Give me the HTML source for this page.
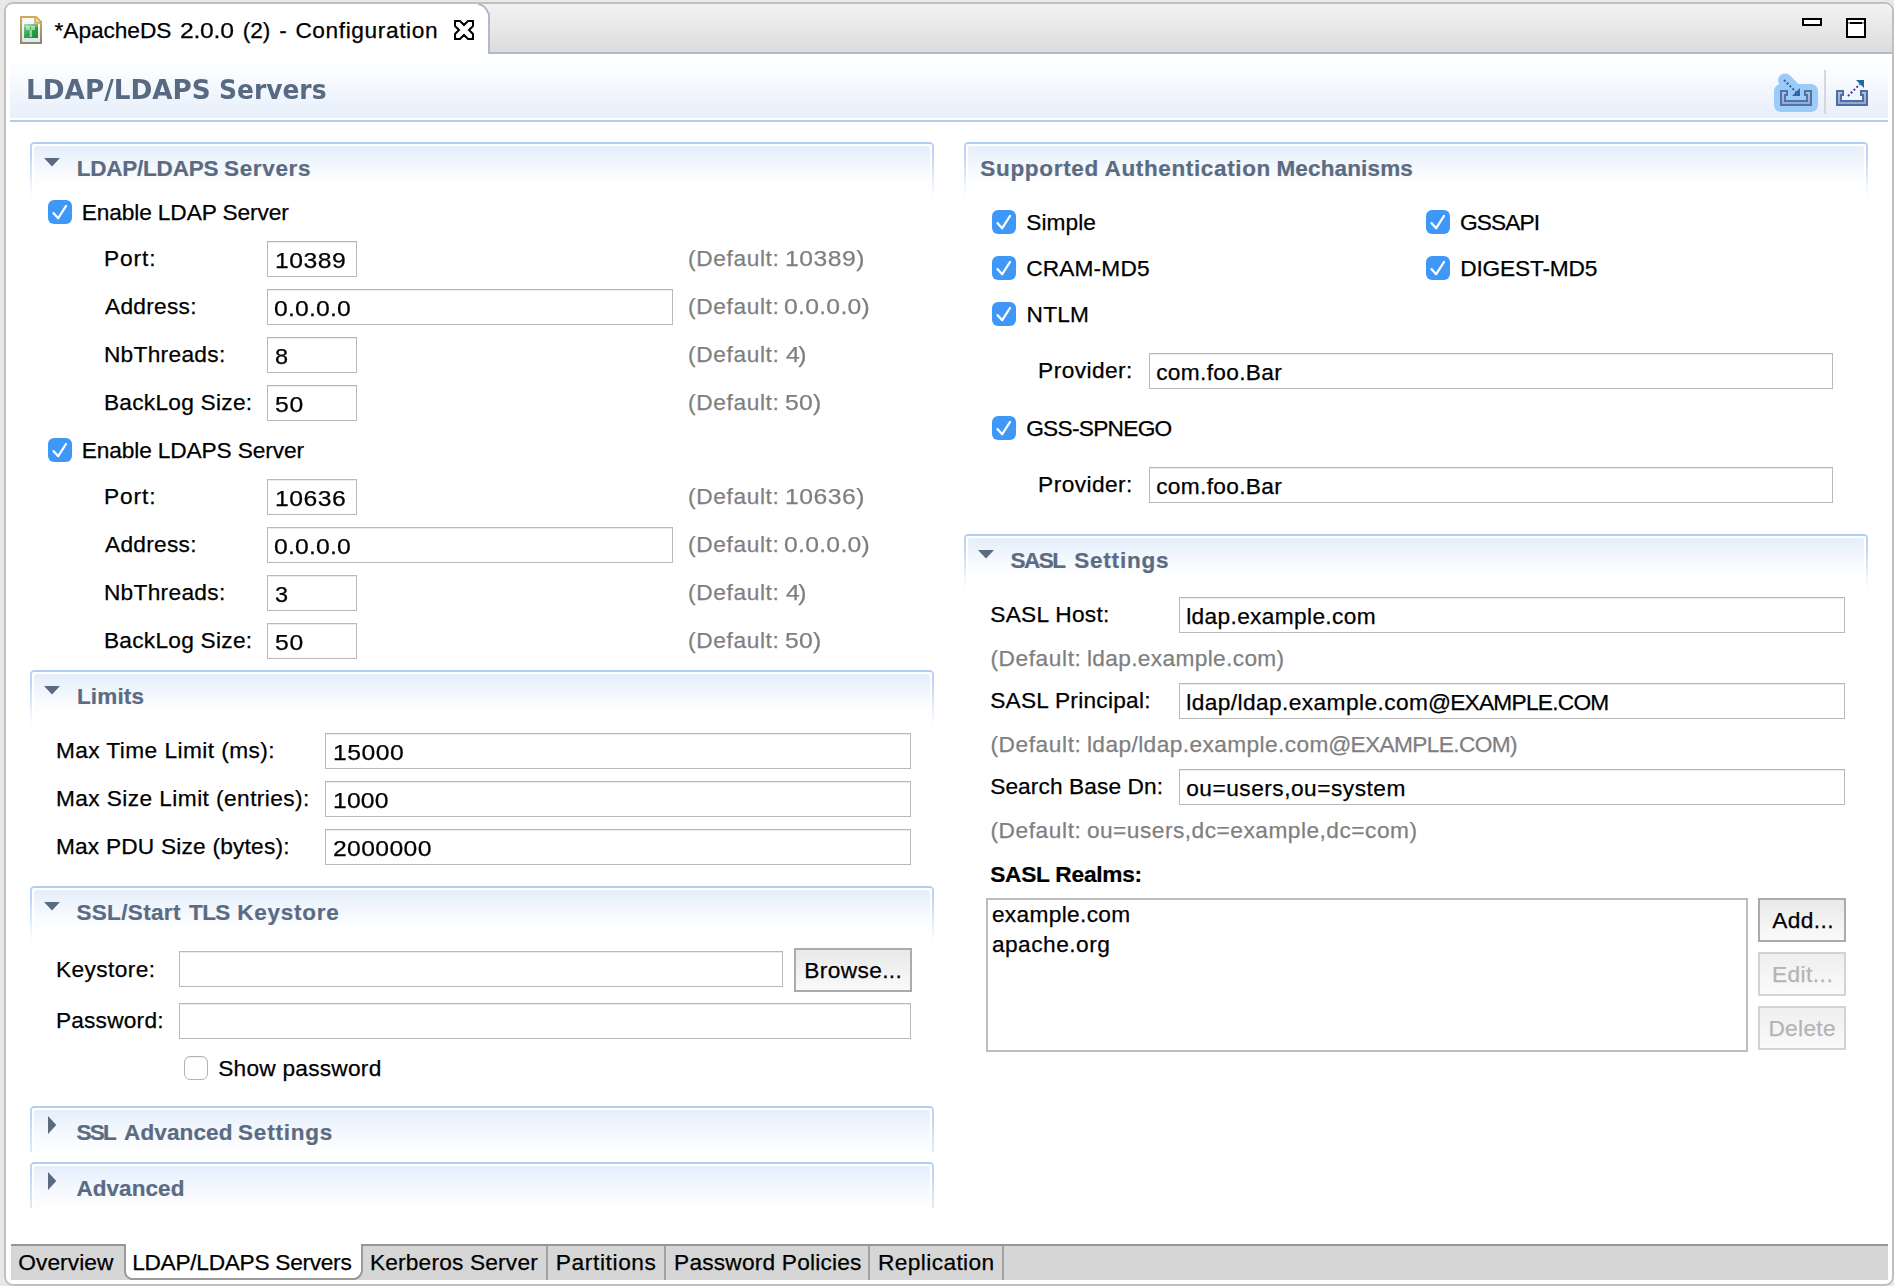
<!DOCTYPE html>
<html><head><meta charset="utf-8"><title>ApacheDS Configuration</title>
<style>
html,body{margin:0;padding:0}
body{width:1894px;height:1286px;position:relative;overflow:hidden;background:#e8e8e8;font-family:"Liberation Sans",sans-serif;font-size:22px;color:#000}
div,span,svg{position:absolute;box-sizing:border-box}
.t{white-space:pre;line-height:28.7px;font-size:22.7px;-webkit-text-stroke:0.25px currentColor;margin-left:0.4px}
.b{font-weight:700}
#win{left:4px;top:2px;width:1890px;height:1284px;border:2px solid #c1c1b9;border-radius:9px;background:#fff}
#tabbar{left:6px;top:4px;width:1886px;height:48px;background:linear-gradient(#f2f2f2,#e9e9e9 45%,#dbdbdb);border-radius:9px 9px 0 0}
#tabline{left:488px;top:52px;width:1404px;height:2px;background:#b1b8cf}
.in{border:1px solid #b9b9b9;background:#fff;height:36px;box-shadow:inset 0 1px 0 #9f9f9f33}
.cb{width:24px;height:24px;border-radius:6px;background:#3f98f7}
.cbu{width:24px;height:24px;border-radius:6px;background:#fff;border:1px solid #b4b4b4;box-shadow:inset 0 1px 1px #0001}
.sec{border:2px solid #b1cef1;border-left-color:#bad4f3;border-right-color:#bad4f3;border-bottom:0;border-radius:4px 4px 0 0;height:56px;-webkit-mask-image:linear-gradient(#000 0,#000 20%,transparent 100%);mask-image:linear-gradient(#000 0,#000 20%,transparent 100%)}
.secg{left:2px;top:2px;right:2px;bottom:0;background:linear-gradient(#e5effb,#f2f7fd 55%,#fff 92%);border-radius:2px 2px 0 0}
.secc{-webkit-mask-image:linear-gradient(#000 0,#000 20%,rgba(0,0,0,.45) 100%);mask-image:linear-gradient(#000 0,#000 20%,rgba(0,0,0,.45) 100%)}
.secc .secg{background:linear-gradient(#e5effb,#f1f6fd 55%,#fbfdff 100%)}
.btn{border:2px solid #ababab;background:linear-gradient(#e9e9e9,#fafafa);}
.btnd{border:2px solid #d3d3d3;background:linear-gradient(#efefef,#fafafa);}
.tri{width:0;height:0}
</style></head>
<body>
<div id="win"></div><div id="tabbar"></div><div id="tabline"></div>
<svg style="left:6px;top:4px" width="490" height="52" viewBox="0 0 490 52"><path d="M0 50V8Q0 0 8 0H472Q479 1 481 6Q482 9 483 10V49H490" fill="#fff"/><path d="M472 0Q478 1 480.5 5.500Q482 9 483 10V49H490" fill="none" stroke="#b1b8cf" stroke-width="2"/></svg>
<svg style="left:20px;top:16px" width="22" height="28" viewBox="0 0 22 28"><defs><linearGradient id="g1" x1="0" y1="0" x2="0" y2="1"><stop offset="0" stop-color="#d2a955"/><stop offset="1" stop-color="#8f8864"/></linearGradient><linearGradient id="g2" x1="0" y1="0" x2="0" y2="1"><stop offset="0" stop-color="#fbfcfe"/><stop offset="1" stop-color="#dbe4f6"/></linearGradient><linearGradient id="g3" x1="0" y1="0" x2="1" y2="1"><stop offset="0" stop-color="#7fd58f"/><stop offset="0.5" stop-color="#2fa548"/><stop offset="1" stop-color="#168a32"/></linearGradient></defs><path d="M1 1H16L21 6V27H1Z" fill="url(#g2)" stroke="url(#g1)" stroke-width="2"/><path d="M15 1V7H21" fill="#ecd3a0" stroke="#cfa85a" stroke-width="1.5"/><rect x="4" y="8" width="14" height="14" fill="url(#g3)"/><path d="M4 8h14v3h-14z" fill="#fff" opacity=".25"/><path d="M6 10h4v4h-4zM11 10h4v4h-4zM9.500 14h2.500v7h-2.500z" fill="#fff" opacity=".5"/></svg>
<svg style="left:453px;top:19px" width="22" height="22" viewBox="0 0 22 22"><path d="M2 2H7L11 6L15 2H20V7L16 11L20 15V20H15L11 16L7 20H2V15L6 11L2 7Z" fill="#fff" stroke="#000" stroke-width="2" stroke-linejoin="miter"/></svg>
<div style="left:1802px;top:18px;width:20px;height:8px;border:2px solid #000;background:#fff"></div>
<div style="left:1846px;top:18px;width:20px;height:20px;border:2px solid #000;background:#fff"><div style="left:0;top:2px;width:16px;height:2px;background:#999"></div><div style="left:2px;top:2px;width:12px;height:2px;background:#000"></div></div>
<div style="left:10px;top:54px;width:1878px;height:64px;background:linear-gradient(#fff 0,#fafcfe 30%,#f0f5fd 65%,#e6effb 100%)"></div>
<div style="left:10px;top:120px;width:1878px;height:2px;background:#aecbf0"></div>
<svg style="left:1768px;top:66px" width="110" height="52" viewBox="1768 66 110 52">
<defs><linearGradient id="tr" x1="0" y1="0" x2="0" y2="1"><stop offset="0" stop-color="#b4c3df"/><stop offset="1" stop-color="#8fa6cf"/></linearGradient></defs>
<rect x="1774" y="84" width="44" height="28" rx="7" fill="#9dcbf8"/>
<path d="M1785 80.500L1797 92.500" stroke="#9dcbf8" stroke-width="14" stroke-linecap="round"/>
<path d="M1781 91H1787V95H1785V101H1807V95H1805V91H1811V105H1781Z" fill="url(#tr)" stroke="#4f73aa" stroke-width="2"/>
<path d="M1784 80L1796 92" stroke="#3d55a8" stroke-width="2" stroke-dasharray="2 2"/>
<path d="M1800 88V96H1792Z" fill="#2c6ba3"/>
<rect x="1824" y="70" width="2" height="44" fill="#d5d7dc"/>
<path d="M1837 91H1843V95H1841V101H1863V95H1861V91H1867V105H1837Z" fill="url(#tr)" stroke="#4f6fa3" stroke-width="2"/>
<path d="M1848 96L1860 84" stroke="#4a35a8" stroke-width="2" stroke-dasharray="2 2"/>
<path d="M1856 80H1864V88Z" fill="#1f69a4"/>
</svg>
<div class="sec" style="left:30px;top:142px;width:904px;height:56px"><div class="secg"></div></div>
<svg style="left:44px;top:158px" width="16" height="9" viewBox="0 0 16 9"><path d="M0 0H16L8 8.4Z" fill="#5a6b80"/></svg>
<div class="sec" style="left:30px;top:670px;width:904px;height:56px"><div class="secg"></div></div>
<svg style="left:44px;top:686px" width="16" height="9" viewBox="0 0 16 9"><path d="M0 0H16L8 8.4Z" fill="#5a6b80"/></svg>
<div class="sec" style="left:30px;top:886px;width:904px;height:56px"><div class="secg"></div></div>
<svg style="left:44px;top:902px" width="16" height="9" viewBox="0 0 16 9"><path d="M0 0H16L8 8.4Z" fill="#5a6b80"/></svg>
<div class="sec secc" style="left:30px;top:1106px;width:904px;height:46px"><div class="secg"></div></div>
<svg style="left:48px;top:1116px" width="9" height="18" viewBox="0 0 9 18"><path d="M0 0V18L8.300 9Z" fill="#5a6b80"/></svg>
<div class="sec secc" style="left:30px;top:1162px;width:904px;height:46px"><div class="secg"></div></div>
<svg style="left:48px;top:1172px" width="9" height="18" viewBox="0 0 9 18"><path d="M0 0V18L8.300 9Z" fill="#5a6b80"/></svg>
<div class="sec" style="left:964px;top:142px;width:904px;height:56px"><div class="secg"></div></div>
<div class="sec" style="left:964px;top:534px;width:904px;height:56px"><div class="secg"></div></div>
<svg style="left:978px;top:550px" width="16" height="9" viewBox="0 0 16 9"><path d="M0 0H16L8 8.4Z" fill="#5a6b80"/></svg>
<div class="cb" style="left:48px;top:200px"><svg style="left:0;top:0" width="24" height="24" viewBox="0 0 24 24"><path d="M5.6 13.2L10.2 18.2L18 6" fill="none" stroke="#fff" stroke-width="2.3" stroke-linecap="round" stroke-linejoin="round"/></svg></div>
<div class="cb" style="left:48px;top:438px"><svg style="left:0;top:0" width="24" height="24" viewBox="0 0 24 24"><path d="M5.6 13.2L10.2 18.2L18 6" fill="none" stroke="#fff" stroke-width="2.3" stroke-linecap="round" stroke-linejoin="round"/></svg></div>
<div class="in" style="left:267px;top:241px;width:90px;height:36px"></div>
<div class="in" style="left:267px;top:289px;width:406px;height:36px"></div>
<div class="in" style="left:267px;top:337px;width:90px;height:36px"></div>
<div class="in" style="left:267px;top:385px;width:90px;height:36px"></div>
<div class="in" style="left:267px;top:479px;width:90px;height:36px"></div>
<div class="in" style="left:267px;top:527px;width:406px;height:36px"></div>
<div class="in" style="left:267px;top:575px;width:90px;height:36px"></div>
<div class="in" style="left:267px;top:623px;width:90px;height:36px"></div>
<div class="in" style="left:325px;top:733px;width:586px;height:36px"></div>
<div class="in" style="left:325px;top:781px;width:586px;height:36px"></div>
<div class="in" style="left:325px;top:829px;width:586px;height:36px"></div>
<div class="in" style="left:179px;top:951px;width:604px;height:36px"></div>
<div class="in" style="left:179px;top:1003px;width:732px;height:36px"></div>
<div class="btn" style="left:794px;top:948px;width:118px;height:44px"></div>
<div class="cbu" style="left:184px;top:1056px"></div>
<div class="cb" style="left:992px;top:210px"><svg style="left:0;top:0" width="24" height="24" viewBox="0 0 24 24"><path d="M5.6 13.2L10.2 18.2L18 6" fill="none" stroke="#fff" stroke-width="2.3" stroke-linecap="round" stroke-linejoin="round"/></svg></div>
<div class="cb" style="left:992px;top:256px"><svg style="left:0;top:0" width="24" height="24" viewBox="0 0 24 24"><path d="M5.6 13.2L10.2 18.2L18 6" fill="none" stroke="#fff" stroke-width="2.3" stroke-linecap="round" stroke-linejoin="round"/></svg></div>
<div class="cb" style="left:992px;top:302px"><svg style="left:0;top:0" width="24" height="24" viewBox="0 0 24 24"><path d="M5.6 13.2L10.2 18.2L18 6" fill="none" stroke="#fff" stroke-width="2.3" stroke-linecap="round" stroke-linejoin="round"/></svg></div>
<div class="cb" style="left:992px;top:416px"><svg style="left:0;top:0" width="24" height="24" viewBox="0 0 24 24"><path d="M5.6 13.2L10.2 18.2L18 6" fill="none" stroke="#fff" stroke-width="2.3" stroke-linecap="round" stroke-linejoin="round"/></svg></div>
<div class="cb" style="left:1426px;top:210px"><svg style="left:0;top:0" width="24" height="24" viewBox="0 0 24 24"><path d="M5.6 13.2L10.2 18.2L18 6" fill="none" stroke="#fff" stroke-width="2.3" stroke-linecap="round" stroke-linejoin="round"/></svg></div>
<div class="cb" style="left:1426px;top:256px"><svg style="left:0;top:0" width="24" height="24" viewBox="0 0 24 24"><path d="M5.6 13.2L10.2 18.2L18 6" fill="none" stroke="#fff" stroke-width="2.3" stroke-linecap="round" stroke-linejoin="round"/></svg></div>
<div class="in" style="left:1149px;top:353px;width:684px;height:36px"></div>
<div class="in" style="left:1149px;top:467px;width:684px;height:36px"></div>
<div class="in" style="left:1179px;top:597px;width:666px;height:36px"></div>
<div class="in" style="left:1179px;top:683px;width:666px;height:36px"></div>
<div class="in" style="left:1179px;top:769px;width:666px;height:36px"></div>
<div style="left:986px;top:898px;width:762px;height:154px;border:2px solid #bdbdbd;background:#fff"></div>
<div class="btn" style="left:1758px;top:898px;width:88px;height:44px"></div>
<div class="btnd" style="left:1758px;top:952px;width:88px;height:44px"></div>
<div class="btnd" style="left:1758px;top:1006px;width:88px;height:44px"></div>
<div style="left:11px;top:1244px;width:1877px;height:36px;background:#d6d6d6;border-top:2px solid #969696"></div>
<svg style="left:120px;top:1240px" width="250" height="44" viewBox="120 1240 250 44"><path d="M126 1240V1272Q126 1277 131 1278H354Q360 1277 361 1272V1240Z" fill="#fff"/><path d="M125 1244V1272Q125.500 1277 131 1279H355Q361 1277 362 1271V1246" fill="none" stroke="#9a9a9a" stroke-width="2"/></svg>
<div style="left:546px;top:1246px;width:2px;height:34px;background:#a3a3a3"></div>
<div style="left:664px;top:1246px;width:2px;height:34px;background:#a3a3a3"></div>
<div style="left:868px;top:1246px;width:2px;height:34px;background:#a3a3a3"></div>
<div style="left:1002px;top:1246px;width:2px;height:34px;background:#a3a3a3"></div>
<span class="t" style="left:54.20px;top:15.70px;letter-spacing:-0.062px;">*ApacheDS </span>
<span class="t" style="left:180.01px;top:15.70px;letter-spacing:-0.255px;transform:scaleX(1.090);transform-origin:0 0;">2.0.0 </span>
<span class="t" style="left:242.30px;top:15.70px;letter-spacing:-0.050px;">(2) </span>
<span class="t" style="left:278.80px;top:15.70px;letter-spacing:0.000px;">- </span>
<span class="t" style="left:295.00px;top:15.70px;letter-spacing:0.600px;">Configuration</span>
<span class="t b" style="left:25.85px;top:73.30px;letter-spacing:0.000px;font-size:27px;line-height:33px;-webkit-text-stroke-width:0.22px;color:#586a82;font-family:'DejaVu Sans', 'Liberation Sans', sans-serif;-webkit-text-stroke:0;transform:scaleX(0.973);transform-origin:0 0;">LDAP/LDAPS </span>
<span class="t b" style="left:218.15px;top:73.30px;letter-spacing:0.000px;font-size:27px;line-height:33px;-webkit-text-stroke-width:0.22px;color:#586a82;font-family:'DejaVu Sans', 'Liberation Sans', sans-serif;-webkit-text-stroke:0;transform:scaleX(0.924);transform-origin:0 0;">Servers</span>
<span class="t b" style="left:76.30px;top:155.00px;letter-spacing:-0.222px;font-size:22.5px;line-height:28.5px;-webkit-text-stroke-width:0.22px;color:#5a6b82;">LDAP/LDAPS </span>
<span class="t b" style="left:223.60px;top:155.00px;letter-spacing:0.667px;font-size:22.5px;line-height:28.5px;-webkit-text-stroke-width:0.22px;color:#5a6b82;">Servers</span>
<span class="t b" style="left:76.50px;top:683.00px;letter-spacing:0.180px;font-size:22.5px;line-height:28.5px;-webkit-text-stroke-width:0.22px;color:#5a6b82;">Limits</span>
<span class="t b" style="left:76.00px;top:899.00px;letter-spacing:0.350px;font-size:22.5px;line-height:28.5px;-webkit-text-stroke-width:0.22px;color:#5a6b82;">SSL/Start </span>
<span class="t b" style="left:188.70px;top:899.00px;letter-spacing:-0.650px;font-size:22.5px;line-height:28.5px;-webkit-text-stroke-width:0.22px;color:#5a6b82;">TLS </span>
<span class="t b" style="left:236.90px;top:899.00px;letter-spacing:0.757px;font-size:22.5px;line-height:28.5px;-webkit-text-stroke-width:0.22px;color:#5a6b82;">Keystore</span>
<span class="t b" style="left:76.00px;top:1119.00px;letter-spacing:-1.650px;font-size:22.5px;line-height:28.5px;-webkit-text-stroke-width:0.22px;color:#5a6b82;">SSL </span>
<span class="t b" style="left:123.70px;top:1119.00px;letter-spacing:0.114px;font-size:22.5px;line-height:28.5px;-webkit-text-stroke-width:0.22px;color:#5a6b82;">Advanced </span>
<span class="t b" style="left:237.70px;top:1119.00px;letter-spacing:0.771px;font-size:22.5px;line-height:28.5px;-webkit-text-stroke-width:0.22px;color:#5a6b82;">Settings</span>
<span class="t b" style="left:76.00px;top:1175.00px;letter-spacing:0.071px;font-size:22.5px;line-height:28.5px;-webkit-text-stroke-width:0.22px;color:#5a6b82;">Advanced</span>
<span class="t b" style="left:979.90px;top:155.00px;letter-spacing:0.688px;font-size:22.5px;line-height:28.5px;-webkit-text-stroke-width:0.22px;color:#5a6b82;">Supported </span>
<span class="t b" style="left:1104.20px;top:155.00px;letter-spacing:0.631px;font-size:22.5px;line-height:28.5px;-webkit-text-stroke-width:0.22px;color:#5a6b82;">Authentication </span>
<span class="t b" style="left:1276.00px;top:155.00px;letter-spacing:0.156px;font-size:22.5px;line-height:28.5px;-webkit-text-stroke-width:0.22px;color:#5a6b82;">Mechanisms</span>
<span class="t b" style="left:1010.00px;top:547.00px;letter-spacing:-1.500px;font-size:22.5px;line-height:28.5px;-webkit-text-stroke-width:0.22px;color:#5a6b82;">SASL </span>
<span class="t b" style="left:1073.80px;top:547.00px;letter-spacing:0.800px;font-size:22.5px;line-height:28.5px;-webkit-text-stroke-width:0.22px;color:#5a6b82;">Settings</span>
<span class="t" style="left:81.30px;top:197.70px;letter-spacing:-0.112px;">Enable LDAP Server</span>
<span class="t" style="left:81.30px;top:435.70px;letter-spacing:-0.117px;">Enable LDAPS Server</span>
<span class="t" style="left:103.50px;top:244.00px;letter-spacing:0.950px;">Port:</span>
<span class="t" style="left:274.62px;top:245.70px;letter-spacing:0.459px;transform:scaleX(1.090);transform-origin:0 0;">10389</span>
<span class="t" style="left:687.70px;top:244.00px;letter-spacing:0.625px;color:#7f7f7f;">(Default: </span>
<span class="t" style="left:784.82px;top:244.00px;letter-spacing:0.472px;color:#7f7f7f;transform:scaleX(1.090);transform-origin:0 0;">10389)</span>
<span class="t" style="left:104.70px;top:292.00px;letter-spacing:0.271px;">Address:</span>
<span class="t" style="left:273.71px;top:293.70px;letter-spacing:0.180px;transform:scaleX(1.090);transform-origin:0 0;">0.0.0.0</span>
<span class="t" style="left:687.70px;top:292.00px;letter-spacing:0.625px;color:#7f7f7f;">(Default: </span>
<span class="t" style="left:783.61px;top:292.00px;letter-spacing:0.256px;color:#7f7f7f;transform:scaleX(1.090);transform-origin:0 0;">0.0.0.0)</span>
<span class="t" style="left:103.50px;top:340.00px;letter-spacing:0.311px;">NbThreads:</span>
<span class="t" style="left:274.26px;top:341.70px;letter-spacing:0.000px;transform:scaleX(1.036);transform-origin:0 0;">8</span>
<span class="t" style="left:687.70px;top:340.00px;letter-spacing:0.625px;color:#7f7f7f;">(Default: </span>
<span class="t" style="left:785.70px;top:340.00px;letter-spacing:-1.294px;color:#7f7f7f;transform:scaleX(1.090);transform-origin:0 0;">4)</span>
<span class="t" style="left:103.50px;top:388.00px;letter-spacing:0.267px;">BackLog Size:</span>
<span class="t" style="left:274.21px;top:389.70px;letter-spacing:0.670px;transform:scaleX(1.090);transform-origin:0 0;">50</span>
<span class="t" style="left:687.70px;top:388.00px;letter-spacing:0.625px;color:#7f7f7f;">(Default: </span>
<span class="t" style="left:784.11px;top:388.00px;letter-spacing:0.234px;color:#7f7f7f;transform:scaleX(1.090);transform-origin:0 0;">50)</span>
<span class="t" style="left:103.50px;top:482.00px;letter-spacing:0.950px;">Port:</span>
<span class="t" style="left:274.62px;top:483.70px;letter-spacing:0.459px;transform:scaleX(1.090);transform-origin:0 0;">10636</span>
<span class="t" style="left:687.70px;top:482.00px;letter-spacing:0.625px;color:#7f7f7f;">(Default: </span>
<span class="t" style="left:784.82px;top:482.00px;letter-spacing:0.472px;color:#7f7f7f;transform:scaleX(1.090);transform-origin:0 0;">10636)</span>
<span class="t" style="left:104.70px;top:530.00px;letter-spacing:0.271px;">Address:</span>
<span class="t" style="left:273.71px;top:531.70px;letter-spacing:0.180px;transform:scaleX(1.090);transform-origin:0 0;">0.0.0.0</span>
<span class="t" style="left:687.70px;top:530.00px;letter-spacing:0.625px;color:#7f7f7f;">(Default: </span>
<span class="t" style="left:783.61px;top:530.00px;letter-spacing:0.256px;color:#7f7f7f;transform:scaleX(1.090);transform-origin:0 0;">0.0.0.0)</span>
<span class="t" style="left:103.50px;top:578.00px;letter-spacing:0.311px;">NbThreads:</span>
<span class="t" style="left:274.26px;top:579.70px;letter-spacing:0.000px;transform:scaleX(1.036);transform-origin:0 0;">3</span>
<span class="t" style="left:687.70px;top:578.00px;letter-spacing:0.625px;color:#7f7f7f;">(Default: </span>
<span class="t" style="left:785.70px;top:578.00px;letter-spacing:-1.294px;color:#7f7f7f;transform:scaleX(1.090);transform-origin:0 0;">4)</span>
<span class="t" style="left:103.50px;top:626.00px;letter-spacing:0.267px;">BackLog Size:</span>
<span class="t" style="left:274.21px;top:627.70px;letter-spacing:0.670px;transform:scaleX(1.090);transform-origin:0 0;">50</span>
<span class="t" style="left:687.70px;top:626.00px;letter-spacing:0.625px;color:#7f7f7f;">(Default: </span>
<span class="t" style="left:784.11px;top:626.00px;letter-spacing:0.234px;color:#7f7f7f;transform:scaleX(1.090);transform-origin:0 0;">50)</span>
<span class="t" style="left:55.50px;top:736.00px;letter-spacing:0.432px;">Max Time Limit (ms):</span>
<span class="t" style="left:332.42px;top:737.70px;letter-spacing:0.459px;transform:scaleX(1.090);transform-origin:0 0;">15000</span>
<span class="t" style="left:55.50px;top:784.00px;letter-spacing:0.425px;">Max Size Limit (entries):</span>
<span class="t" style="left:332.42px;top:785.70px;letter-spacing:0.116px;transform:scaleX(1.090);transform-origin:0 0;">1000</span>
<span class="t" style="left:55.50px;top:832.00px;letter-spacing:0.210px;">Max PDU Size (bytes):</span>
<span class="t" style="left:332.31px;top:833.70px;letter-spacing:0.332px;transform:scaleX(1.090);transform-origin:0 0;">2000000</span>
<span class="t" style="left:55.50px;top:955.00px;letter-spacing:0.413px;">Keystore:</span>
<span class="t" style="left:55.50px;top:1006.00px;letter-spacing:0.213px;">Password:</span>
<span class="t" style="left:217.80px;top:1053.70px;letter-spacing:0.242px;">Show password</span>
<span class="t" style="left:803.80px;top:956.00px;letter-spacing:0.388px;">Browse...</span>
<span class="t" style="left:17.90px;top:1247.60px;letter-spacing:0.071px;">Overview</span>
<span class="t" style="left:131.80px;top:1247.60px;letter-spacing:-0.288px;">LDAP/LDAPS Servers</span>
<span class="t" style="left:369.50px;top:1247.60px;letter-spacing:0.193px;">Kerberos Server</span>
<span class="t" style="left:555.40px;top:1247.60px;letter-spacing:0.622px;">Partitions</span>
<span class="t" style="left:673.70px;top:1247.60px;letter-spacing:0.200px;">Password Policies</span>
<span class="t" style="left:877.70px;top:1247.60px;letter-spacing:0.380px;">Replication</span>
<span class="t" style="left:1025.80px;top:207.70px;letter-spacing:0.080px;">Simple</span>
<span class="t" style="left:1025.80px;top:253.70px;letter-spacing:0.157px;">CRAM-MD5</span>
<span class="t" style="left:1026.20px;top:299.70px;letter-spacing:0.200px;">NTLM</span>
<span class="t" style="left:1025.80px;top:413.70px;letter-spacing:-0.722px;">GSS-SPNEGO</span>
<span class="t" style="left:1459.60px;top:207.70px;letter-spacing:-0.900px;">GSSAPI</span>
<span class="t" style="left:1459.80px;top:253.70px;letter-spacing:-0.156px;">DIGEST-MD5</span>
<span class="t" style="left:1037.70px;top:356.00px;letter-spacing:0.437px;">Provider:</span>
<span class="t" style="left:1155.80px;top:357.70px;letter-spacing:0.320px;">com.foo.Bar</span>
<span class="t" style="left:1037.70px;top:470.00px;letter-spacing:0.437px;">Provider:</span>
<span class="t" style="left:1155.80px;top:471.70px;letter-spacing:0.320px;">com.foo.Bar</span>
<span class="t" style="left:989.80px;top:600.00px;letter-spacing:0.311px;">SASL Host:</span>
<span class="t" style="left:1185.80px;top:601.70px;letter-spacing:0.353px;">ldap.example.com</span>
<span class="t" style="left:990.00px;top:644.00px;letter-spacing:0.587px;color:#7f7f7f;">(Default: </span>
<span class="t" style="left:1086.50px;top:644.00px;letter-spacing:0.350px;color:#7f7f7f;">ldap.example.com)</span>
<span class="t" style="left:989.80px;top:686.00px;letter-spacing:0.257px;">SASL Principal:</span>
<span class="t" style="left:1185.80px;top:687.70px;letter-spacing:0.420px;">ldap/ldap.example.com</span>
<span class="t" style="left:1427.50px;top:687.70px;letter-spacing:-0.736px;">@EXAMPLE.COM</span>
<span class="t" style="left:990.00px;top:730.00px;letter-spacing:0.587px;color:#7f7f7f;">(Default: </span>
<span class="t" style="left:1086.50px;top:730.00px;letter-spacing:0.415px;color:#7f7f7f;">ldap/ldap.example.com</span>
<span class="t" style="left:1327.80px;top:730.00px;letter-spacing:-0.633px;color:#7f7f7f;">@EXAMPLE.COM)</span>
<span class="t" style="left:989.80px;top:772.00px;letter-spacing:0.093px;">Search Base Dn:</span>
<span class="t" style="left:1185.80px;top:773.70px;letter-spacing:0.500px;">ou=users,ou=system</span>
<span class="t" style="left:990.00px;top:816.00px;letter-spacing:0.587px;color:#7f7f7f;">(Default: </span>
<span class="t" style="left:1086.50px;top:816.00px;letter-spacing:0.496px;color:#7f7f7f;">ou=users,dc=example,dc=com)</span>
<span class="t b" style="left:989.80px;top:860.00px;letter-spacing:-0.245px;-webkit-text-stroke-width:0.22px;">SASL Realms:</span>
<span class="t" style="left:991.50px;top:900.00px;letter-spacing:0.340px;">example.com</span>
<span class="t" style="left:991.50px;top:930.00px;letter-spacing:0.489px;">apache.org</span>
<span class="t" style="left:1771.90px;top:905.50px;letter-spacing:0.400px;">Add...</span>
<span class="t" style="left:1771.50px;top:959.50px;letter-spacing:0.467px;color:#b4b4b4;">Edit...</span>
<span class="t" style="left:1768.00px;top:1013.50px;letter-spacing:0.320px;color:#b4b4b4;">Delete</span>
</body></html>
